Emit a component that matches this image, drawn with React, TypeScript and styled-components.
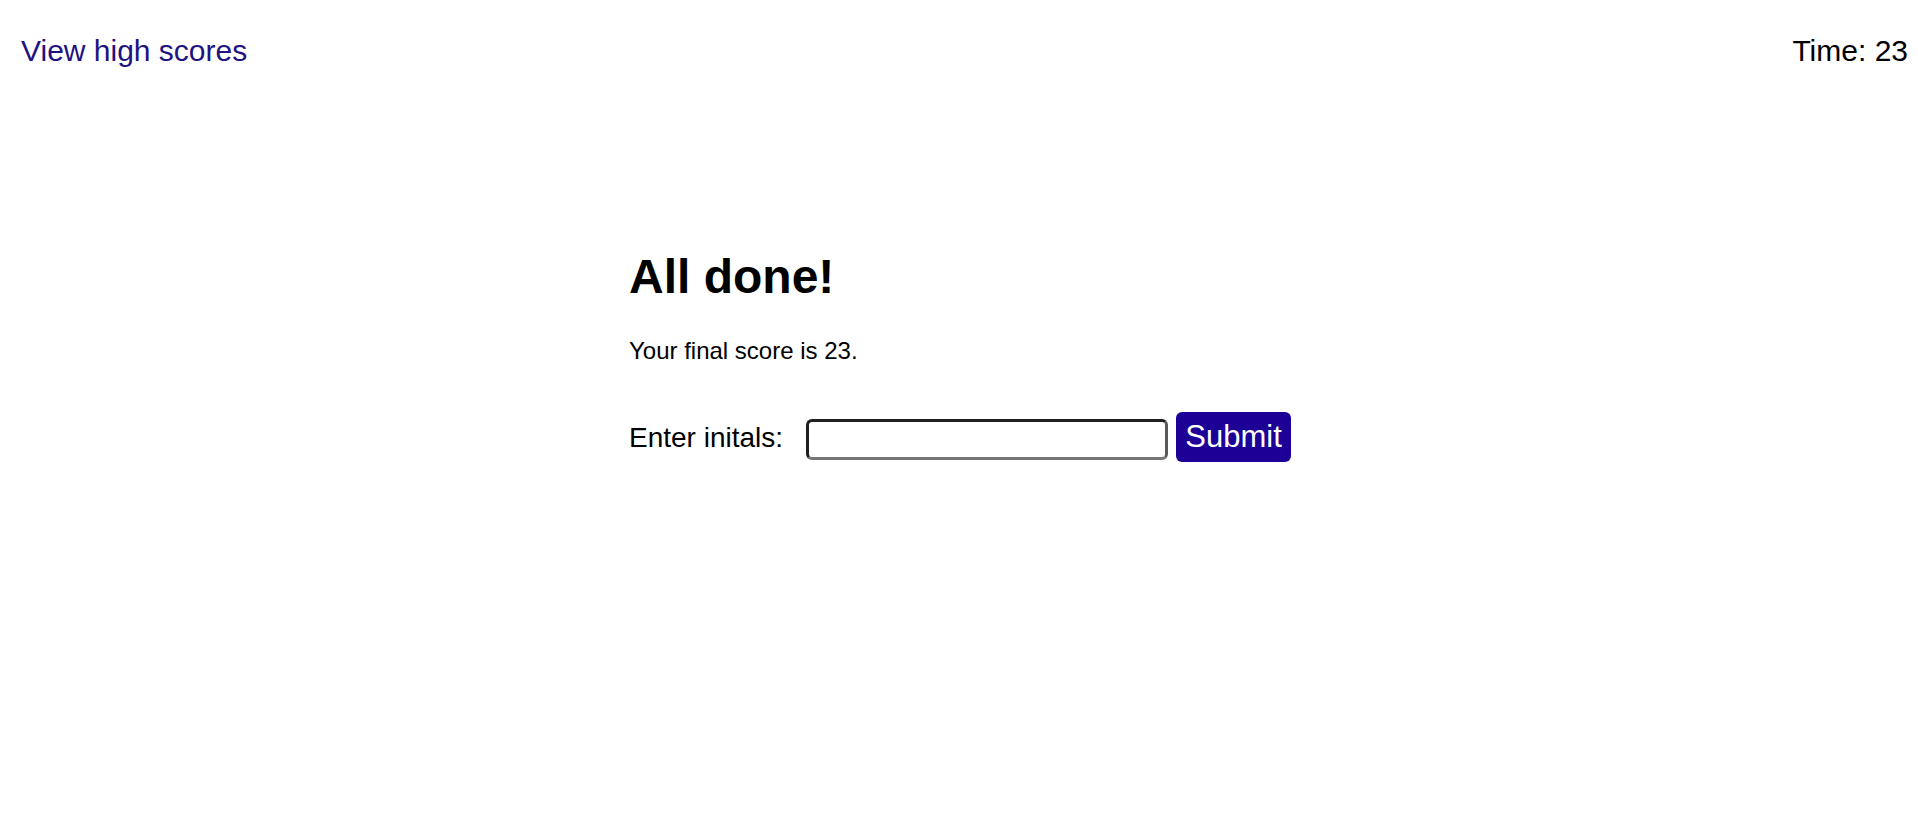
import React, { useState } from "react";
import styled, { createGlobalStyle } from "styled-components";

const GlobalStyle = createGlobalStyle`
  html, body {
    margin: 0;
    padding: 0;
    background: #ffffff;
    font-family: "Liberation Sans", Arial, sans-serif;
    color: #000000;
  }
  * { box-sizing: border-box; }
`;

const Header = styled.header`
  display: flex;
  justify-content: space-between;
  align-items: flex-start;
  padding: 34px 10px 0 21px;
  font-size: 30px;
  line-height: 34px;
`;

const HighScoresLink = styled.a`
  color: #1f1380;
  text-decoration: none;
  cursor: pointer;
`;

const Timer = styled.div`
  color: #000000;
`;

const Main = styled.main`
  width: 666px;
  margin: 182px auto 0;
  padding-left: 3px;
`;

const Title = styled.h1`
  margin: 0;
  font-size: 48px;
  line-height: 54px;
  font-weight: 700;
`;

const Score = styled.p`
  margin: 33px 0 0;
  font-size: 24px;
  line-height: 28px;
`;

const Form = styled.form`
  display: flex;
  align-items: flex-end;
  margin-top: 47px;
  height: 50px;
`;

const Label = styled.label`
  flex-shrink: 0;
  white-space: nowrap;
  align-self: center;
  font-size: 28px;
  line-height: 32px;
  margin-right: 23px;
  margin-top: 2px;
`;

const Input = styled.input`
  flex-shrink: 0;
  width: 362px;
  height: 41px;
  margin: 0 8px 2px 0;
  padding: 0 6px;
  font-size: 24px;
  font-family: "Liberation Sans", Arial, sans-serif;
  border-style: solid;
  border-width: 3px;
  border-color: #1f1f1f #5a5a5a #767676 #1f1f1f;
  border-radius: 6px;
  background: #ffffff;
  outline: none;
`;

const SubmitButton = styled.button`
  flex-shrink: 0;
  height: 50px;
  width: 115px;
  padding: 0;
  border: none;
  border-radius: 6px;
  background: #1d0096;
  color: #ffffff;
  font-family: "Liberation Sans", Arial, sans-serif;
  font-size: 31px;
  line-height: 34px;
  cursor: pointer;
`;

export default function App() {
  const [initials, setInitials] = useState("");
  return (
    <>
      <GlobalStyle />
      <Header>
        <HighScoresLink>View high scores</HighScoresLink>
        <Timer>Time: 23</Timer>
      </Header>
      <Main>
        <Title>All done!</Title>
        <Score>Your final score is 23.</Score>
        <Form onSubmit={(e) => e.preventDefault()}>
          <Label htmlFor="initials">Enter initals:</Label>
          <Input
            id="initials"
            type="text"
            value={initials}
            onChange={(e) => setInitials(e.target.value)}
          />
          <SubmitButton type="submit">Submit</SubmitButton>
        </Form>
      </Main>
    </>
  );
}
